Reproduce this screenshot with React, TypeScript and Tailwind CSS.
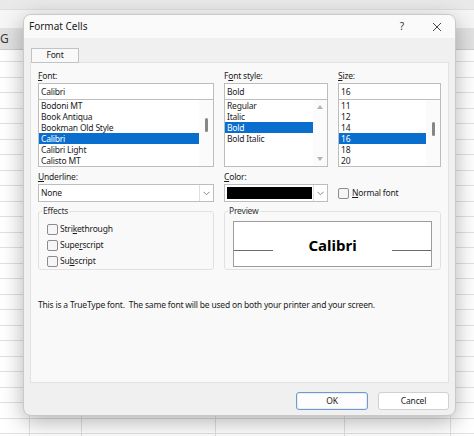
import React from 'react';

// Underlines the access-key letter of a label
function Key({ t, k }: { t: string; k: number }) {
    return (
        <>
            {t.slice(0, k)}
            <span className="underline underline-offset-[1px]">{t[k]}</span>
            {t.slice(k + 1)}
        </>
    );
}

function SheetRow({ h }: { h: string }) {
    return (
        <div className={`flex border-b border-[#e1e1e1] ${h}`}>
            <div className="w-[30px] border-r border-[#e1e1e1]" />
            <div className="w-[52px] border-r border-[#e1e1e1]" />
            <div className="w-[134px] border-r border-[#e1e1e1]" />
            <div className="w-[129px] border-r border-[#e1e1e1]" />
            <div className="w-[106px] border-r border-[#e1e1e1]" />
            <div className="w-[23px]" />
        </div>
    );
}

// Sfondo: foglio di calcolo dietro la finestra
function Sheet() {
    return (
        <div className="w-[474px] h-[436px] overflow-hidden bg-white">
            <div className="h-[10px] bg-[#e9e9e9] border-b border-[#dedede]" />
            <div className="h-[18px] bg-[#f6f6f6]" />
            <div className="h-[22px] bg-[#e2e2e2] border-b border-[#cdcdcd] flex items-center text-[12px] text-[#3a3a3a]">
                <span className="ml-0">G</span>
            </div>
            <SheetRow h="h-[12px]" />
            {Array.from({ length: 25 }).map((_, i) => (
                <SheetRow key={i} h="h-[15.5px]" />
            ))}
        </div>
    );
}

function Chevron() {
    return (
        <svg width="7" height="5" viewBox="0 0 7 5">
            <path d="M0.5 0.8 L3.5 3.8 L6.5 0.8" fill="none" stroke="#7a7a7a" strokeWidth="0.9" />
        </svg>
    );
}

interface ListProps {
    items: string[];
    selected: number;
    scroll: 'thumb-font' | 'thumb-size' | 'arrows';
}

function ListBox({ items, selected, scroll }: ListProps) {
    return (
        <div className="h-[67px] bg-white border border-t-0 border-[#bdbdbd] flex overflow-hidden">
            <div className="flex-1 flex flex-col">
                {items.map((it, i) => (
                    <div
                        key={it}
                        className={`h-[11px] leading-[11px] pl-[2px] whitespace-nowrap ${i === selected ? 'bg-[#0a6ecf] text-white' : ''}`}
                    >
                        {it}
                    </div>
                ))}
            </div>
            <div className="w-[14px] flex flex-col items-center bg-[#fbfbfb]">
                {scroll === 'arrows' && (
                    <>
                        <svg className="mt-[5px]" width="6" height="4" viewBox="0 0 6 4">
                            <path d="M0 4 L3 0 L6 4 Z" fill="#b4b4b4" />
                        </svg>
                        <div className="flex-1" />
                        <svg className="mb-[5px]" width="6" height="4" viewBox="0 0 6 4">
                            <path d="M0 0 L3 4 L6 0 Z" fill="#b4b4b4" />
                        </svg>
                    </>
                )}
                {scroll === 'thumb-font' && <div className="mt-[18px] w-[3px] h-[14px] rounded-full bg-[#868686]" />}
                {scroll === 'thumb-size' && <div className="mt-[22px] w-[3px] h-[14px] rounded-full bg-[#868686]" />}
            </div>
        </div>
    );
}

function TextBox({ value }: { value: string }) {
    return (
        <div className="h-[17px] bg-white border border-[#bdbdbd] leading-[15px] pl-[2px]">{value}</div>
    );
}

function Check({ label }: { label: React.ReactNode }) {
    return (
        <div className="flex items-center gap-[2px] h-[16px]">
            <div className="w-[11px] h-[11px] rounded-[2px] border border-[#8c8c8c] bg-[#f6f6f6]" />
            <span>{label}</span>
        </div>
    );
}

export default function App() {
    return (
        <div className="relative w-[474px] h-[436px] overflow-hidden font-['Noto_Sans',sans-serif] text-[#1b1b1b]">
            <Sheet />

            {/* Finestra di dialogo */}
            <div className="absolute left-[23px] top-[14px] w-[433px] h-[402px] rounded-[8px] border border-[#c9c9c9] bg-[#f0f0f0] shadow-[0_6px_22px_rgba(0,0,0,0.3)] overflow-hidden flex flex-col text-[8.5px] tracking-[-0.2px]">
                {/* Titolo */}
                <div className="h-[23px] bg-[#fafafa] flex items-center pl-[5px] pr-[13px] tracking-normal">
                    <span className="text-[10px]">Format Cells</span>
                    <span className="ml-auto text-[10px] text-[#333]">?</span>
                    <svg className="ml-[28px]" width="10" height="10" viewBox="0 0 10 10">
                        <path d="M1 1 L9 9 M9 1 L1 9" stroke="#333" strokeWidth="0.9" />
                    </svg>
                </div>

                <div className="flex-1 flex flex-col px-[6px]">
                    {/* Scheda */}
                    <div className="h-[24px] flex items-end">
                        <div className="ml-[1px] w-[48px] h-[15px] border border-[#c3c3c3] bg-[#f9f9f9] flex items-center justify-center -mb-px relative">
                            Font
                        </div>
                    </div>

                    {/* Pannello */}
                    <div className="h-[321px] border border-[#e2e2e2] bg-[#f9f9f9] pt-[7px] px-[7px] flex flex-col">
                        <div className="grid grid-cols-[176px_104px_103px] gap-x-[10px]">
                            <div className="flex flex-col">
                                <div className="h-[12px] leading-[12px] mb-[1px]"><Key t="Font:" k={0} /></div>
                                <TextBox value="Calibri" />
                                <ListBox
                                    items={['Bodoni MT', 'Book Antiqua', 'Bookman Old Style', 'Calibri', 'Calibri Light', 'Calisto MT']}
                                    selected={3}
                                    scroll="thumb-font"
                                />
                            </div>
                            <div className="flex flex-col">
                                <div className="h-[12px] leading-[12px] mb-[1px]"><Key t="Font style:" k={1} /></div>
                                <TextBox value="Bold" />
                                <ListBox items={['Regular', 'Italic', 'Bold', 'Bold Italic']} selected={2} scroll="arrows" />
                            </div>
                            <div className="flex flex-col">
                                <div className="h-[12px] leading-[12px] mb-[1px]"><Key t="Size:" k={0} /></div>
                                <TextBox value="16" />
                                <ListBox items={['11', '12', '14', '16', '18', '20']} selected={3} scroll="thumb-size" />
                            </div>

                            {/* Sottolineatura / colore */}
                            <div className="flex flex-col mt-[4px]">
                                <div className="h-[12px] leading-[12px] mb-[1px]"><Key t="Underline:" k={0} /></div>
                                <div className="h-[18px] bg-white border border-[#bdbdbd] flex">
                                    <div className="flex-1 leading-[16px] pl-[2px]">None</div>
                                    <div className="w-[14px] border-l border-[#dedede] flex items-center justify-center">
                                        <Chevron />
                                    </div>
                                </div>
                            </div>
                            <div className="flex flex-col mt-[4px]">
                                <div className="h-[12px] leading-[12px] mb-[1px]"><Key t="Color:" k={0} /></div>
                                <div className="h-[18px] bg-white border border-[#bdbdbd] flex">
                                    <div className="flex-1 p-[2px] pr-[1px]">
                                        <div className="h-full bg-black" />
                                    </div>
                                    <div className="w-[14px] border-l border-[#dedede] flex items-center justify-center">
                                        <Chevron />
                                    </div>
                                </div>
                            </div>
                            <div className="flex flex-col mt-[4px]">
                                <div className="h-[12px] mb-[1px]" />
                                <div className="h-[18px] flex items-center">
                                    <Check label={<><span className="ml-[1px]" /><Key t="Normal font" k={0} /></>} />
                                </div>
                            </div>

                            {/* Effetti / anteprima */}
                            <fieldset className="mt-[3px] h-[65px] border border-[#e1e1e1] rounded-[3px] pl-[8px] pt-[4px]">
                                <legend className="-ml-[5px] px-[1px] text-[#333]">Effects</legend>
                                <Check label={<Key t="Strikethrough" k={4} />} />
                                <Check label={<Key t="Superscript" k={4} />} />
                                <Check label={<Key t="Subscript" k={2} />} />
                            </fieldset>
                            <fieldset className="col-span-2 mt-[3px] h-[65px] border border-[#e1e1e1] rounded-[3px] px-[8px] pt-[3px]">
                                <legend className="-ml-[5px] px-[1px] text-[#333]">Preview</legend>
                                <div className="h-[46px] bg-white border border-[#9c9c9c] flex items-start">
                                    <div className="w-[39px] h-[29px] border-b border-[#6a6a6a]" />
                                    <div className="flex-1 pt-[13px] leading-[20px] text-center font-bold text-[15px] tracking-normal text-black">Calibri</div>
                                    <div className="w-[39px] h-[29px] border-b border-[#6a6a6a]" />
                                </div>
                            </fieldset>
                        </div>

                        <p className="mt-[29px] leading-[12px]">
                            This is a TrueType font.&nbsp; The same font will be used on both your printer and your screen.
                        </p>
                    </div>

                    {/* Pulsanti */}
                    <div className="flex-1 flex justify-end items-start pt-[9px] gap-[10px]">
                        <button className="w-[72px] h-[18px] rounded-[3px] border border-[#7299c9] bg-[#fdfdfd] shadow-[inset_0_0_0_1px_#e4edf8]">
                            OK
                        </button>
                        <button className="w-[71px] h-[18px] rounded-[3px] border border-[#d0d0d0] bg-white">
                            Cancel
                        </button>
                    </div>
                </div>
            </div>
        </div>
    );
}
